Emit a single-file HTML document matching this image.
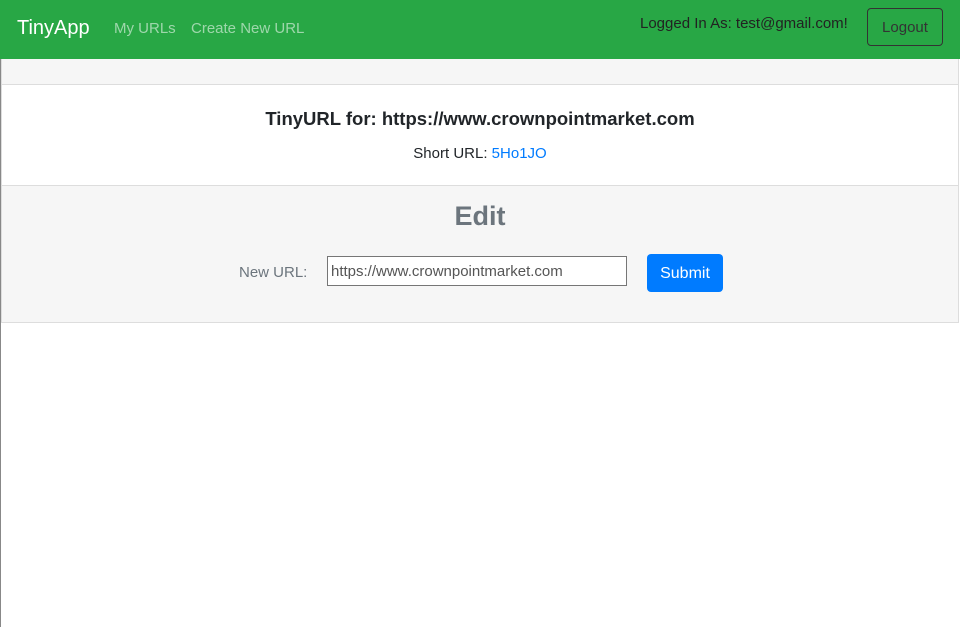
<!DOCTYPE html>
<html><head><meta charset="utf-8"><style>
*{box-sizing:border-box;margin:0;padding:0}
body{width:960px;height:627px;background:#fff;font-family:"Liberation Sans",sans-serif;position:relative;overflow:hidden}
.nav{position:absolute;left:0;top:0;width:960px;height:59px;background:#28a745}
.t{position:absolute;white-space:nowrap}
.card{position:absolute;left:1px;top:59px;width:958px;height:264px;border:1px solid #ddd;border-top:none}
.hdr{position:absolute;left:0;top:0;width:100%;height:26px;background:#f6f6f6;border-bottom:1px solid #ddd}
.ftr{position:absolute;left:0;top:126px;width:100%;height:137px;background:#f6f6f6;border-top:1px solid #ddd}
</style></head><body>
<div style="position:absolute;left:0;top:0;width:1px;height:627px;background:#888"></div>
<div class="nav">
<div class="t" style="left:17px;top:17px;font-size:20px;color:#fff">TinyApp</div>
<div class="t" style="left:114px;top:20px;font-size:15px;color:rgba(255,255,255,.55)">My URLs</div>
<div class="t" style="left:191px;top:20px;font-size:15px;color:rgba(255,255,255,.55)">Create New URL</div>
<div class="t" style="left:640px;top:15px;font-size:15px;color:#222">Logged In As: test@gmail.com!</div>
<div style="position:absolute;left:867px;top:8px;width:76px;height:38px;border:1px solid #333;border-radius:4px;color:#333;font-size:15px;text-align:center;line-height:38px">Logout</div>
</div>
<div class="card">
<div class="hdr"></div>
<div class="t" style="left:0;width:100%;text-align:center;top:49px;font-size:18.5px;font-weight:bold;color:#212529">TinyURL for: https://www.crownpointmarket.com</div>
<div class="t" style="left:0;width:100%;text-align:center;top:86px;font-size:15px;color:#212529">Short URL: <span style="color:#007bff">5Ho1JO</span></div>
<div class="ftr">
<div class="t" style="left:0;width:100%;text-align:center;top:15px;font-size:27px;font-weight:bold;color:#6c757d">Edit</div>
<div class="t" style="left:237px;top:78px;font-size:15px;color:#6c757d">New URL:</div>
<div style="position:absolute;left:325px;top:70px;width:300px;height:30px;border:1px solid #767676;background:#fff;font-size:15px;color:#555;padding:5px 3px;line-height:20px">https://www.crownpointmarket.com</div>
<div style="position:absolute;left:645px;top:68px;width:76px;height:38px;background:#007bff;border-radius:4px;color:#fff;font-size:16px;text-align:center;line-height:39px">Submit</div>
</div>
</div>
</body></html>
